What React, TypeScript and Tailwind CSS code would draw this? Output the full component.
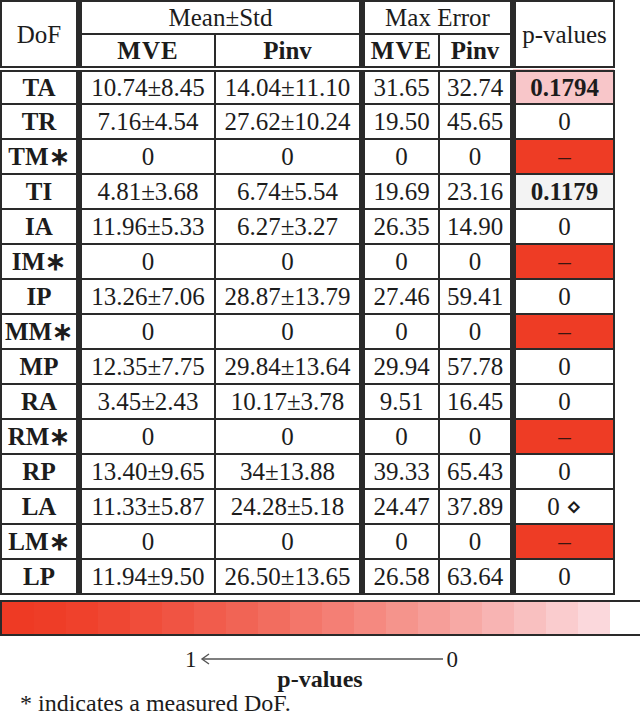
type Row = {
  dof: string;
  mveMean: string;
  pinvMean: string;
  mveMax: string;
  pinvMax: string;
  p: string;
  tone?: 'red' | 'pink' | 'grey';
};

const rows: Row[] = [
  { dof: 'TA', mveMean: '10.74±8.45', pinvMean: '14.04±11.10', mveMax: '31.65', pinvMax: '32.74', p: '0.1794', tone: 'pink' },
  { dof: 'TR', mveMean: '7.16±4.54', pinvMean: '27.62±10.24', mveMax: '19.50', pinvMax: '45.65', p: '0' },
  { dof: 'TM∗', mveMean: '0', pinvMean: '0', mveMax: '0', pinvMax: '0', p: '–', tone: 'red' },
  { dof: 'TI', mveMean: '4.81±3.68', pinvMean: '6.74±5.54', mveMax: '19.69', pinvMax: '23.16', p: '0.1179', tone: 'grey' },
  { dof: 'IA', mveMean: '11.96±5.33', pinvMean: '6.27±3.27', mveMax: '26.35', pinvMax: '14.90', p: '0' },
  { dof: 'IM∗', mveMean: '0', pinvMean: '0', mveMax: '0', pinvMax: '0', p: '–', tone: 'red' },
  { dof: 'IP', mveMean: '13.26±7.06', pinvMean: '28.87±13.79', mveMax: '27.46', pinvMax: '59.41', p: '0' },
  { dof: 'MM∗', mveMean: '0', pinvMean: '0', mveMax: '0', pinvMax: '0', p: '–', tone: 'red' },
  { dof: 'MP', mveMean: '12.35±7.75', pinvMean: '29.84±13.64', mveMax: '29.94', pinvMax: '57.78', p: '0' },
  { dof: 'RA', mveMean: '3.45±2.43', pinvMean: '10.17±3.78', mveMax: '9.51', pinvMax: '16.45', p: '0' },
  { dof: 'RM∗', mveMean: '0', pinvMean: '0', mveMax: '0', pinvMax: '0', p: '–', tone: 'red' },
  { dof: 'RP', mveMean: '13.40±9.65', pinvMean: '34±13.88', mveMax: '39.33', pinvMax: '65.43', p: '0' },
  { dof: 'LA', mveMean: '11.33±5.87', pinvMean: '24.28±5.18', mveMax: '24.47', pinvMax: '37.89', p: '0 ⋄' },
  { dof: 'LM∗', mveMean: '0', pinvMean: '0', mveMax: '0', pinvMax: '0', p: '–', tone: 'red' },
  { dof: 'LP', mveMean: '11.94±9.50', pinvMean: '26.50±13.65', mveMax: '26.58', pinvMax: '63.64', p: '0' },
];

// colour bar: 19 steps from the saturated red down to a pale pink
const from = [238, 58, 36];
const to = [251, 216, 220];
const steps = Array.from({ length: 19 }, (_, i) => {
  const t = Math.pow(i / 18, 1.4);
  const c = from.map((f, k) => Math.round(f + (to[k] - f) * t));
  return `rgb(${c[0]},${c[1]},${c[2]})`;
});

const cell = 'border-2 border-[#2a2a2a] text-center align-middle p-0 whitespace-nowrap';
const dbl = 'border-r-[6px] border-r-double';

function PCell({ row }: { row: Row }) {
  if (row.tone === 'red') {
    return <td className={`${cell} bg-[#ee3c25] text-[#3b1510]`}>–</td>;
  }
  if (row.tone === 'pink') {
    return <td className={`${cell} bg-[#f8c6c9] font-bold`}>{row.p}</td>;
  }
  if (row.tone === 'grey') {
    return <td className={`${cell} bg-[#f3f3f3] font-bold`}>{row.p}</td>;
  }
  return <td className={cell}>{row.p}</td>;
}

export default function App() {
  return (
    <div className="w-[640px] h-[716px] overflow-hidden bg-white [font-family:'Liberation_Serif','Times_New_Roman',serif] text-[#1c1c1c]">
      <table className="table-fixed border-collapse w-[613px] text-[25px] leading-none">
        <colgroup>
          <col className="w-[78px]" />
          <col className="w-[136px]" />
          <col className="w-[147px]" />
          <col className="w-[77px]" />
          <col className="w-[74px]" />
          <col className="w-[101px]" />
        </colgroup>
        <thead>
          <tr className="h-[33px]">
            <th rowSpan={2} className={`${cell} ${dbl} font-normal`}>DoF</th>
            <th colSpan={2} className={`${cell} ${dbl} font-normal`}>Mean±Std</th>
            <th colSpan={2} className={`${cell} ${dbl} font-normal`}>Max Error</th>
            <th rowSpan={2} className={`${cell} font-normal`}>p-values</th>
          </tr>
          <tr className="h-[35px] border-b-[6px] border-double border-[#2a2a2a]">
            <th className={`${cell} font-bold tracking-[1px]`}>MVE</th>
            <th className={`${cell} ${dbl} font-bold`}>Pinv</th>
            <th className={`${cell} font-bold tracking-[1px]`}>MVE</th>
            <th className={`${cell} ${dbl} font-bold`}>Pinv</th>
          </tr>
        </thead>
        <tbody>
          {rows.map((r) => (
            <tr key={r.dof} className="h-[35px]">
              <td className={`${cell} ${dbl} font-bold`}>{r.dof}</td>
              <td className={cell}>{r.mveMean}</td>
              <td className={`${cell} ${dbl}`}>{r.pinvMean}</td>
              <td className={cell}>{r.mveMax}</td>
              <td className={`${cell} ${dbl}`}>{r.pinvMax}</td>
              <PCell row={r} />
            </tr>
          ))}
        </tbody>
      </table>

      <div className="mt-[5px] flex h-[36px] w-[640px] border-y-2 border-l-2 border-[#2a2a2a]">
        {steps.map((c, i) => (
          <div key={i} className="h-full w-[32px] shrink-0" style={{ backgroundColor: c }} />
        ))}
      </div>

      <div className="mt-[13px] flex h-[20px] items-center pl-[185px] text-[23px] leading-none">
        <span>1</span>
        <svg width="246" height="14" viewBox="0 0 246 14" className="mx-[2px]">
          <line x1="4" y1="7" x2="244" y2="7" stroke="#555" strokeWidth="1.4" />
          <polyline points="10,2 3,7 10,12" fill="none" stroke="#555" strokeWidth="1.4" />
        </svg>
        <span>0</span>
      </div>
      <div className="flex h-[19px] items-center justify-center text-[24px] font-bold leading-none">p-values</div>
      <div className="mt-[3px] pl-[20px] text-[24px] leading-none">* indicates a measured DoF.</div>
    </div>
  );
}
